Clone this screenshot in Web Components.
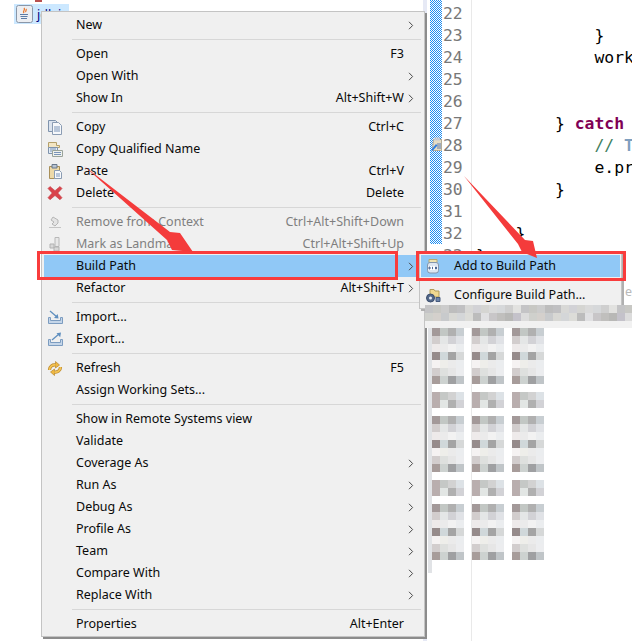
<!DOCTYPE html>
<html><head><meta charset="utf-8">
<style>html,body{margin:0;padding:0;background:#fff}</style>
</head><body>
<ide-app></ide-app>
<script>
function def(name, css, html, extra){
  const t=document.createElement('template');
  t.innerHTML='<style>'+css+'</style>'+html;
  customElements.define(name, class extends HTMLElement{
    constructor(){super();this.attachShadow({mode:'open'}).appendChild(t.content.cloneNode(true));}
    connectedCallback(){ if(extra) extra.call(this,this.shadowRoot); }
  });
}
const I={
 copy:'<path d="M1.500 1.500h7l3 3v8h-10z" fill="#dbe3ee" stroke="#7f93ad"/><path d="M5.500 3.500h6l3 3v9h-9z" fill="#f6f8fb" stroke="#8b9cb3"/><path d="M7 8h6M7 10h6M7 12h6" stroke="#7a94b8"/>',
 copyq:'<path d="M1.500 1.500h8v3h3v2h-11z" fill="#f3e6c4" stroke="#b5a06a"/><path d="M1.500 6.500h9v6h-9z" fill="#e3ecf5" stroke="#7f93ad"/><path d="M5.500 9.500h10v6h-10z" fill="#eef1ee" stroke="#9aa39a"/><path d="M3 8h6M3 10h2M7 11.500h7M7 13.500h7" stroke="#7a94b8"/>',
 paste:'<path d="M2.500 3.500h10v12h-10z" fill="#edd9a8" stroke="#a98f58"/><path d="M5 1.500h5v3.500h-5z" fill="#b9c3cf" stroke="#68788c"/><path d="M7.500 7.500h5l2 2v6h-7z" fill="#f8f9fb" stroke="#8b9cb3"/><path d="M9 11h4M9 13h4" stroke="#7a94b8"/>',
 del:'<path d="M3 1.500l5 4.200 5-4.200 2 2-4.200 4.500 4.200 4.700-2 2-5-4.200-5 4.200-2-2 4.200-4.700L1 3.500z" fill="#d9434b" stroke="#c23a42" stroke-width=".6"/>',
 rem:'<path d="M2 13.500h12" stroke="#c4c4c4"/><path d="M6 3l5 3v3l-3 3-3-2 2-2-3-2z" fill="#e4e4e4" stroke="#b5b5b5"/>',
 mark:'<path d="M8 1.500h4v9H8z" fill="#e8e8e8" stroke="#b8b8b8"/><path d="M3 8h4v4H3zM7 11h5v4H7z" fill="#d8d8d8" stroke="#b2b2b2"/>',
 imp:'<path d="M1.500 8.500h2v3h10v-3h2v6h-14z" fill="#c5d6e9" stroke="#7c9cc0"/><path d="M3 2l7 6" stroke="#5f8fbf" stroke-width="1.300"/><path d="M11.500 9.500l-.8-4.500-3.700 3.900z" fill="#5f8fbf"/>',
 exp:'<path d="M1.500 8.500h2v3h10v-3h2v6h-14z" fill="#c5d6e9" stroke="#7c9cc0"/><path d="M5 9l7-6" stroke="#5f8fbf" stroke-width="1.300"/><path d="M14 1.500l-4.500.8 3.700 3.900z" fill="#5f8fbf"/>',
 ref:'<g stroke="#b9862a" stroke-width="3.200"><path d="M2.500 10C2.500 6.500 5.500 4.500 8.500 5"/><path d="M13.500 7c0 3.500-3 5.500-6 5"/></g><path d="M8.500 1.500l4 3.500-4 3z" fill="#f0b840" stroke="#b9862a" stroke-width=".7"/><path d="M7.500 15.500l-4-3.500 4-3z" fill="#f0b840" stroke="#b9862a" stroke-width=".7"/><g stroke="#f5c452" stroke-width="1.800"><path d="M2.500 10C2.500 6.500 5.500 4.500 8.500 5"/><path d="M13.500 7c0 3.500-3 5.500-6 5"/></g>',
 jar:'<path d="M4 1.500h8v3H4z" fill="#efe3b0" stroke="#b7a870"/><rect x="2.500" y="4.500" width="11" height="10.500" rx="2.500" fill="#dfe7f1" stroke="#8496ad"/><rect x="3.500" y="8" width="9" height="4" fill="#fff"/><path d="M4 9h1v2H4zM7.500 8.800v2.400M10.500 9h1v2h-1z" stroke="#3c5a8a" stroke-width=".9"/>',
 cfg:'<path d="M5 2.500h4l1 1.500h4v6H5z" fill="#efd890" stroke="#b19c58"/><circle cx="5.500" cy="11" r="4" fill="#52688a" stroke="#3c4e6c"/><circle cx="5.500" cy="11" r="1.500" fill="#e8eef6"/><path d="M11 10.500h4v4h-4z" fill="#6b83a8" stroke="#465a7c"/>'
};
function svg(k){return '<svg width="16" height="16" viewBox="0 0 16 16" fill="none">'+I[k]+'</svg>';}

def('menu-sep',':host{display:flex;align-items:center;height:7px;padding-left:30px;box-sizing:border-box}div{flex:1;height:1px;margin-right:3px;background:#d7d7d7}','<div></div>');

def('menu-item',`
 :host{display:grid;grid-template-columns:21px 1fr auto 20px;align-items:center;height:22px;color:#0a0a0a;white-space:nowrap}
 :host([disabled]){color:#7f7f7f}
 :host([active]){background:#90c8f6;margin-left:2px;grid-template-columns:19px 1fr auto 20px}
 .ic{display:flex;justify-content:flex-end;width:100%}
 .l{padding:0 0 2px 13px}
 .a{text-align:right;padding-bottom:2px}
 .c{display:flex;justify-content:flex-start;padding-left:4px}
 .c svg{display:none}
 :host([sub]) .c svg{display:block}
`,`<span class="ic"><slot name="icon"></slot></span><span class="l"><slot></slot></span><span class="a" id="a"></span><span class="c"><svg width="6" height="9" viewBox="0 0 6 9" fill="none"><path d="M1 .8l3.600 3.700L1 8.200" stroke="#4a4a4a" stroke-width="1"/></svg></span>`,
 function(r){r.getElementById('a').textContent=this.getAttribute('accel')||'';});

def('context-menu',`
 :host{display:block;position:absolute;box-sizing:border-box;background:#f0f0f0;border:1px solid #c4c4c4;box-shadow:2px 2px 0 #8c8c8c;padding:2px 0;
 font:12.5px "Noto Sans",sans-serif}
`,'<slot></slot>');

def('tree-panel',`
 :host{display:block;width:423px;flex:none;background:#fff;font:12.5px "Noto Sans",sans-serif}
 .prev{height:4px;overflow:hidden;padding-left:35px}
 .prev i{display:block;width:7px;height:2px;background:#b85050}
 .row{display:flex;align-items:center;gap:4px;margin-left:14px;width:55px;height:20px;background:#cce8ff;overflow:hidden;padding-left:2px;box-sizing:border-box;color:#000080;white-space:nowrap}
 svg{flex:none}
`,`<div class="prev"><i></i></div><div class="row"><svg width="17" height="18" viewBox="0 0 17 18" fill="none"><rect x=".5" y=".5" width="16" height="17" rx="2" fill="#eceef2" stroke="#8a97a8"/><path d="M8 3c2 2-2 3 0 5M10 4c1 1-1 2 0 3" stroke="#e8762c" stroke-width="1.300"/><path d="M4 9.500h8M4.500 11.500h7M5 13.500h6" stroke="#5b7ba6"/></svg><span>jdk.jar</span></div>`);

def('code-editor',`
 :host{display:flex;flex:1;min-width:0;background:#fff;align-items:flex-start;font:16.4px/22px "DejaVu Sans Mono",monospace;position:relative;overflow:hidden;height:641px}
 .strip{width:12px;height:244px;flex:none;display:block}
 .nums{width:30px;box-sizing:border-box;padding:3px 0 0 1px;color:#787878;flex:none;border-right:1px solid #e9e9e9;height:641px}
 .nums div{height:22px}
 .code{padding:3px 0 0 4px;white-space:pre;color:#000;flex:none}
 .code div{height:22px}
 b{color:#7f0055}
 .c{color:#3f7f5f}.t{color:#7f9fbf;font-weight:bold}
 .note{position:absolute;left:1px;top:137px}
`,`<svg class="strip" width="12" height="244" shape-rendering="crispEdges"><defs><pattern id="d" width="2" height="2" patternUnits="userSpaceOnUse"><rect width="2" height="2" fill="#fff"/><rect width="1" height="1" fill="#1f8ef1"/><rect x="1" y="1" width="1" height="1" fill="#1f8ef1"/></pattern></defs><rect width="12" height="244" fill="url(#d)"/></svg><div class="nums"><div>22</div><div>23</div><div>24</div><div>25</div><div>26</div><div>27</div><div>28</div><div>29</div><div>30</div><div>31</div><div>32</div><div>33</div></div><div class="code"><div></div><div>            }</div><div>            work</div><div></div><div></div><div>        } <b>catch</b></div><div>            <span class="c">// </span><span class="t">T</span></div><div>            e.pr</div><div>        }</div><div></div><div>    }</div><div>}</div></div><svg class="note" width="12" height="15" viewBox="0 0 12 15" fill="none"><path d="M2.500 2.500h8v11h-9z" fill="#e4dcc4" stroke="#b4ac98"/><path d="M3 .5h6v3H3z" fill="#c8ccd4"/><path d="M6 7h4M6 9h4M6 11h4" stroke="#5a7ab0"/><path d="M0 13l5-6 1.500 1.500-5 5.500z" fill="#2f7fe0"/></svg>`);

def('mosaic-block',`
 :host{display:block;position:absolute;left:0;top:0;width:632px;height:641px;pointer-events:none;overflow:hidden}
 .band{position:absolute;left:425px;top:305px;width:207px;height:23px;background:#f1f1f1;z-index:3}
 .bandrow{display:flex;height:8px}
 .bandrow i{width:8px;flex:none}
 .strip{position:absolute;left:428px;top:328px;width:4px;height:245px;background:#e1e3e6}
 .g{position:absolute;display:grid;grid-template-columns:repeat(4,8px);grid-auto-rows:8px}
 .ed{position:absolute;left:625px;top:283px;font:12.5px "Noto Sans",sans-serif;color:#b9b9b9}
`,`<div class="ed">e</div><div class="band" id="b"></div><div class="strip"></div><div id="w"></div>`,
function(r){
 const S=[['#a39999','#c2c7c4','#b0b0b0','#c8ced2'],['#d2cdcd','#e4e6e6','#d2d2d6','#e0e2e6'],['#eeeaea','#ebebeb','#f2f2f2','#ebedef'],['#968b8b','#d0d8da','#a4a4a4','#d6d8d8'],['#f5f2f2','#eeeeea','#ebebeb','#ebedef'],['#d2cdcd','#dee0de','#e6e6e6','#ecedef'],['#a79c9a','#cdd2d0','#9fa0a2','#c0c5c8']];
 const D=[['#b9aeae','#c5c8c6','#d2d2d2','#dde2e6'],['#b9aeae','#e2e6e4','#b0b0b0','#d2d2d6']];
 const w=r.getElementById('w');
 [[328,S],[392,D],[416,S],[480,D],[504,S]].forEach(([y,m])=>{[432,472,512].forEach(x=>{
   const g=document.createElement('div');g.className='g';g.style.left=x+'px';g.style.top=y+'px';
   g.innerHTML=m.flat().map(c=>'<i style="background:'+c+'"></i>').join('');w.appendChild(g);});});
 const P=['#d5d5d2','#c4c4c6','#d8d8d6','#cfcfcf','#bdbdbd','#dadada','#c8c8c4','#d2d2d6','#e2e2e0','#c0c0c2','#d6d8da','#cccccc'];
 const Q=['#dcdcd8','#cfd0cc','#c8c6c8','#d8d8d4','#c4c2ca','#bcbcbc','#d4d0cc','#c0bfbd','#d4d6d8','#dcdcdc','#e0e0e2','#c8cacc','#b8b8b6'];
 const b=r.getElementById('b');
 [P,Q].forEach(L=>{const d=document.createElement('div');d.className='bandrow';
  for(let i=0;i<26;i++){const c=document.createElement('i');c.style.background=L[(i*5+1)%L.length];d.appendChild(c);}b.appendChild(d);});
});

def('callout-box',`:host{display:block;position:absolute;box-sizing:border-box;border:3px solid #f93c3c;pointer-events:none}`,'');

def('arrow-layer',`:host{display:block;position:absolute;left:0;top:0;width:632px;height:641px;pointer-events:none}svg{display:block}`,
`<svg width="632" height="641" viewBox="0 0 632 641"><path d="M84 166L170 232L180 233L193 252L172 250L167 240z" fill="#f43b3b"/><path d="M464 176L525 240L533 241L537 258L522 252L518 244z" fill="#f43b3b"/></svg>`);

const items=[
 ['New','',1],0,['Open','F3'],['Open With','',1],['Show In','Alt+Shift+W',1],0,
 ['Copy','Ctrl+C',0,'copy'],['Copy Qualified Name','',0,'copyq'],['Paste','Ctrl+V',0,'paste'],['Delete','Delete',0,'del'],0,
 ['Remove from Context','Ctrl+Alt+Shift+Down',0,'rem','d'],['Mark as Landmark','Ctrl+Alt+Shift+Up',0,'mark','d'],
 ['Build Path','',1,null,'a'],['Refactor','Alt+Shift+T',1],0,
 ['Import...','',0,'imp'],['Export...','',0,'exp'],0,
 ['Refresh','F5',0,'ref'],['Assign Working Sets...',''],0,
 ['Show in Remote Systems view',''],['Validate',''],['Coverage As','',1],['Run As','',1],['Debug As','',1],['Profile As','',1],['Team','',1],['Compare With','',1],['Replace With','',1],0,
 ['Properties','Alt+Enter']
];
function renderItems(list){return list.map(i=>{
 if(!i) return '<menu-sep></menu-sep>';
 const [t,acc,sub,ic,f]=i;
 return '<menu-item accel="'+(acc||'')+'"'+(sub?' sub':'')+(f=='d'?' disabled':'')+(f=='a'?' active':'')+'>'+(ic?'<span slot="icon" style="display:block;line-height:0">'+svg(ic)+'</span>':'')+t+'</menu-item>';
}).join('');}

def('ide-app',`
 :host{display:flex;position:relative;width:632px;height:641px;overflow:hidden;background:#fff}
 .sash{width:7px;flex:none;background:linear-gradient(90deg,#e6e9f5 4px,#fff 4px)}
 #m{left:41px;top:11px;width:384px;height:626px}
 #s{left:419px;top:252px;width:203px;height:57px;padding:2px 0;box-shadow:2px 2px 0 #b0b0b0}
 #s menu-item{grid-template-columns:20px 1fr auto 8px;margin:0 1px}
 #s menu-sep{padding-left:32px}
 mosaic-block{z-index:2}
 #m,#s{z-index:1}
 callout-box,arrow-layer{z-index:4}
`,`<tree-panel></tree-panel><div class="sash"></div><code-editor></code-editor>
 <mosaic-block></mosaic-block>
 <context-menu id="m">${renderItems(items)}</context-menu>
 <context-menu id="s">${renderItems([['Add to Build Path','',0,'jar','a'],0,['Configure Build Path...','',0,'cfg']])}</context-menu>
 <callout-box style="left:37px;top:251px;width:361px;height:29px"></callout-box>
 <callout-box style="left:416px;top:251px;width:210px;height:30px"></callout-box>
 <arrow-layer></arrow-layer>`);
</script>
</body></html>
